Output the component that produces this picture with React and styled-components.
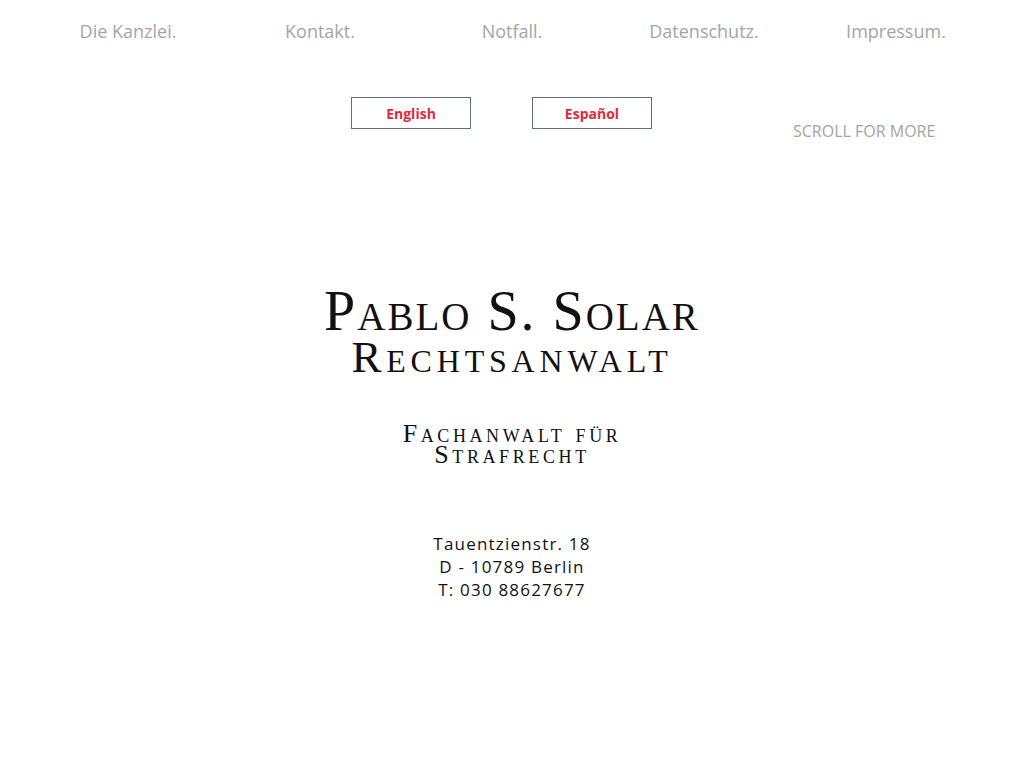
import React from 'react'
import styled, { createGlobalStyle } from 'styled-components'

const Global = createGlobalStyle`
  html, body {
    margin: 0;
    padding: 0;
    background: #fff;
  }
  body {
    font-family: "Open Sans", "Liberation Sans", sans-serif;
  }
`

const Page = styled.div`
  width: 1024px;
  min-height: 768px;
`

const Nav = styled.nav`
  width: 960px;
  margin: 0 auto;
  padding-top: 19px;
  display: grid;
  grid-template-columns: repeat(5, 1fr);
`

const NavLink = styled.a`
  text-align: center;
  font-size: 18px;
  line-height: 25px;
  color: #a5a5a5;
  text-decoration: none;
`

const LangRow = styled.div`
  display: flex;
  align-items: flex-start;
  margin-top: 53px;
  padding-left: 351px;
`

const LangButton = styled.a`
  box-sizing: border-box;
  width: 120px;
  height: 32px;
  border: 1px solid #5f6f7d;
  display: flex;
  align-items: center;
  justify-content: center;
  color: #e5273a;
  font-weight: 700;
  font-size: 14px;
  text-decoration: none;
  margin-right: ${p => p.gap || 0}px;
`

const Scroll = styled.div`
  margin-top: 23px;
  font-size: 16px;
  line-height: 22px;
  color: #a4a4a4;
`

const Hero = styled.header`
  text-align: center;
  font-family: "Liberation Serif", "DejaVu Serif", serif;
  font-variant: small-caps;
  color: #111;
`

const Name = styled.h1`
  margin: 143px 0 0;
  font-weight: 400;
  font-size: 56px;
  line-height: 52px;
  letter-spacing: 2px;
`

const Title = styled.h2`
  margin: 0;
  font-weight: 400;
  font-size: 45px;
  line-height: 40px;
  letter-spacing: 4.8px;
`

const Speciality = styled.h3`
  margin: 46px auto 0;
  width: 260px;
  font-weight: 400;
  font-size: 26px;
  line-height: 21px;
  letter-spacing: 3.6px;
`

const Address = styled.address`
  margin-top: 67px;
  text-align: center;
  font-style: normal;
  font-size: 17px;
  line-height: 23px;
  letter-spacing: 1.2px;
  color: #111;
`

export default function App() {
  const links = ['Die Kanzlei.', 'Kontakt.', 'Notfall.', 'Datenschutz.', 'Impressum.']
  return (
    <Page>
      <Global />
      <Nav>
        {links.map(l => (
          <NavLink key={l} href="#">{l}</NavLink>
        ))}
      </Nav>
      <LangRow>
        <LangButton href="#" gap={61}>English</LangButton>
        <LangButton href="#" gap={141}>Español</LangButton>
        <Scroll>SCROLL FOR MORE</Scroll>
      </LangRow>
      <Hero>
        <Name>Pablo S. Solar</Name>
        <Title>Rechtsanwalt</Title>
        <Speciality>Fachanwalt für Strafrecht</Speciality>
      </Hero>
      <Address>
        Tauentzienstr. 18<br />
        D - 10789 Berlin<br />
        T: 030 88627677
      </Address>
    </Page>
  )
}
